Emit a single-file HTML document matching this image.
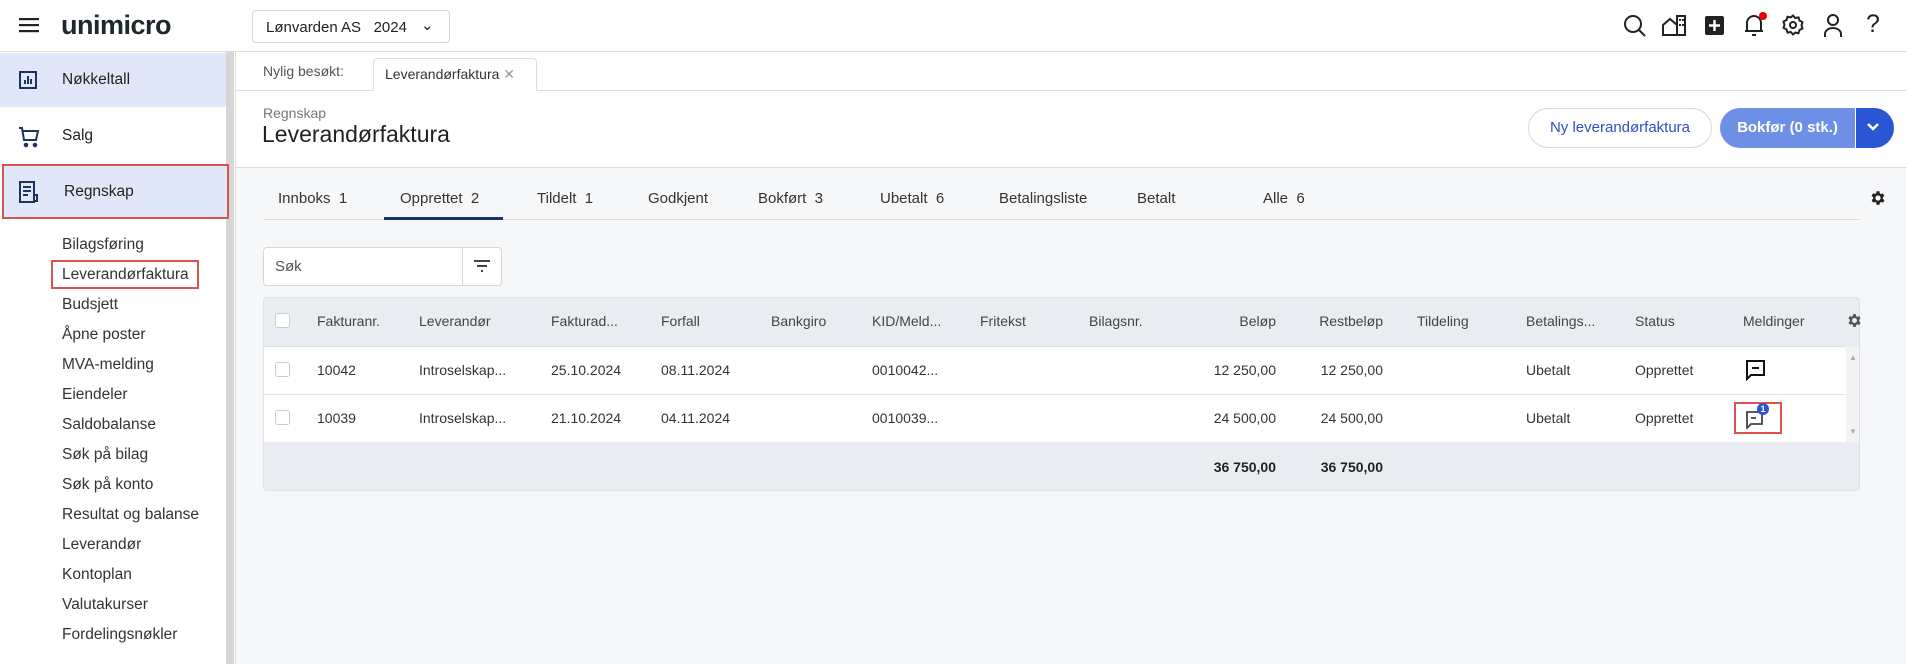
<!DOCTYPE html>
<html><head><meta charset="utf-8"><style>
*{box-sizing:border-box;margin:0;padding:0}
body{width:1906px;height:664px;overflow:hidden;font-family:"Liberation Sans",sans-serif;color:#222;background:#fff;position:relative;font-size:15px}
.a{position:absolute}
.hdr{left:0;top:0;width:1906px;height:52px;border-bottom:1px solid #dcdcdc;background:#fff}
.side{left:0;top:52px;width:236px;height:612px;border-right:1px solid #ddd;background:#fff}
.sb{left:226px;top:52px;width:8px;height:612px;background:#d6d6d6}
.nav{left:0;width:226px;height:54px;display:flex;align-items:center;padding-left:62px;font-size:15.5px;color:#222}
.sub{left:62px;font-size:15.5px;color:#333}
.main{left:236px;top:167px;width:1670px;height:497px;background:#f6f7f9}
.tab{font-size:15px;color:#333;top:190px}
.th{font-size:14px;color:#444;top:313px}
.td{font-size:14px;color:#333}
.r{text-align:right}
</style></head><body>
<div class="a hdr"></div>
<svg class="a" style="left:19px;top:17px" width="20" height="16"><rect y="1" width="20" height="2.2" fill="#222"/><rect y="7" width="20" height="2.2" fill="#222"/><rect y="13" width="20" height="2.2" fill="#222"/></svg>
<div class="a" style="left:61px;top:10px;font-size:27px;font-weight:bold;color:#1a2a2a;letter-spacing:-0.5px">unimicro</div>
<div class="a" style="left:252px;top:10px;width:198px;height:33px;border:1px solid #d5d5d5;border-radius:4px;font-size:15px;padding:8px 0 0 13px;color:#222">Lønvarden AS &nbsp; 2024 <span style="position:absolute;left:168px;top:5px">&#8964;</span></div>
<!-- icons -->
<svg class="a" style="left:1622px;top:13px" width="26" height="26" fill="none" stroke="#222" stroke-width="2"><circle cx="11" cy="11" r="8"/><path d="M17 17l6 6"/></svg>
<svg class="a" style="left:1662px;top:14px" width="24" height="22" fill="#222"><path d="M1 21V11l7-6 7 6v10z M15 21V2h8v19z" fill="none" stroke="#222" stroke-width="2"/><rect x="17" y="5" width="2" height="2"/><rect x="20" y="5" width="2" height="2"/><rect x="17" y="10" width="2" height="2"/><rect x="20" y="10" width="2" height="2"/></svg>
<svg class="a" style="left:1705px;top:16px" width="19" height="19"><rect width="19" height="19" rx="2" fill="#222"/><path d="M9.5 4v11M4 9.5h11" stroke="#fff" stroke-width="2.4"/></svg>
<svg class="a" style="left:1742px;top:11px" width="26" height="27" fill="none" stroke="#222" stroke-width="2"><path d="M5 20V12a7 7 0 0 1 14 0v8H3h18"/><path d="M10 24h4"/><circle cx="21" cy="5" r="4" fill="#e00" stroke="none"/></svg>
<svg class="a" style="left:1782px;top:14px" width="22" height="22" fill="none" stroke="#222" stroke-width="2"><path d="M11 1.5l2.2 2.5 3.3-.6 1 3.2 3 1.5-1 3.2 1 3.2-3 1.5-1 3.2-3.3-.6L11 20.5l-2.2-2.5-3.3.6-1-3.2-3-1.5 1-3.2-1-3.2 3-1.5 1-3.2 3.3.6z"/><circle cx="11" cy="11" r="3"/></svg>
<svg class="a" style="left:1823px;top:13px" width="20" height="25" fill="none" stroke="#222" stroke-width="2"><circle cx="10" cy="7" r="5"/><path d="M2 24v-3a8 6 0 0 1 16 0v3"/></svg>
<div class="a" style="left:1866px;top:10px;font-size:25px;color:#222">?</div>

<div class="a side"></div>
<div class="a sb"></div>
<div class="a nav" style="top:53px;background:#dfe7f8">Nøkkeltall</div>
<svg class="a" style="left:19px;top:71px" width="18" height="18" fill="none" stroke="#1d3461" stroke-width="2"><rect x="1" y="1" width="16" height="16"/><path d="M6 13V9M9 13V5M12 13V8"/></svg>
<div class="a nav" style="top:109px">Salg</div>
<svg class="a" style="left:18px;top:126px" width="22" height="22" fill="none" stroke="#1d3461" stroke-width="2"><path d="M1 2h3l2 12h12l2-9H5"/><circle cx="8" cy="19" r="1.3" fill="#1d3461"/><circle cx="17" cy="19" r="1.3" fill="#1d3461"/></svg>
<div class="a nav" style="top:164px;left:2px;width:227px;height:55px;background:#dfe7f8;border:2px solid #d9534f;padding-left:60px">Regnskap</div>
<svg class="a" style="left:19px;top:181px" width="20" height="22" fill="none" stroke="#1d3461" stroke-width="2"><path d="M1 1h14v20H1z M4 6h8M4 10h8M4 14h5"/><path d="M15 14h3v6h-3"/></svg>
<div class="a sub" style="top:236px">Bilagsføring</div>
<div class="a" style="left:51px;top:260px;width:148px;height:29px;border:2px solid #d9534f"></div>
<div class="a sub" style="top:266px">Leverandørfaktura</div>
<div class="a sub" style="top:296px">Budsjett</div>
<div class="a sub" style="top:326px">Åpne poster</div>
<div class="a sub" style="top:356px">MVA-melding</div>
<div class="a sub" style="top:386px">Eiendeler</div>
<div class="a sub" style="top:416px">Saldobalanse</div>
<div class="a sub" style="top:446px">Søk på bilag</div>
<div class="a sub" style="top:476px">Søk på konto</div>
<div class="a sub" style="top:506px">Resultat og balanse</div>
<div class="a sub" style="top:536px">Leverandør</div>
<div class="a sub" style="top:566px">Kontoplan</div>
<div class="a sub" style="top:596px">Valutakurser</div>
<div class="a sub" style="top:626px">Fordelingsnøkler</div>

<!-- recently visited -->
<div class="a" style="left:236px;top:90px;width:1670px;height:1px;background:#ddd"></div>
<div class="a" style="left:263px;top:63px;font-size:14px;color:#555">Nylig besøkt:</div>
<div class="a" style="left:373px;top:58px;width:164px;height:33px;border:1px solid #ddd;border-bottom:1px solid #fff;border-radius:4px 4px 0 0;background:#fff;font-size:14px;padding:7px 0 0 11px;color:#333">Leverandørfaktura <span style="color:#999">✕</span></div>
<div class="a" style="left:263px;top:105px;font-size:14px;color:#777">Regnskap</div>
<div class="a" style="left:262px;top:121px;font-size:23px;color:#222">Leverandørfaktura</div>
<div class="a" style="left:1528px;top:108px;width:184px;height:40px;border:1px solid #d6d6d6;border-radius:20px;color:#2f4fc4;font-size:15px;text-align:center;line-height:38px">Ny leverandørfaktura</div>
<div class="a" style="left:1720px;top:108px;width:135px;height:40px;border-radius:20px 0 0 20px;background:#6d8fe6;color:#fff;font-size:15px;font-weight:bold;text-align:center;line-height:40px">Bokfør (0 stk.)</div>
<div class="a" style="left:1855px;top:108px;width:39px;height:40px;border-radius:0 20px 20px 0;background:#2a56d6;border-left:1px solid #fff"></div>
<svg class="a" style="left:1866px;top:122px" width="14" height="10" fill="none" stroke="#fff" stroke-width="2.5"><path d="M2 2l5 5 5-5"/></svg>

<div class="a main" style="border-top:1px solid #ddd"></div>
<div class="a tab" style="left:278px">Innboks &nbsp;1</div>
<div class="a tab" style="left:400px">Opprettet &nbsp;2</div>
<div class="a tab" style="left:537px">Tildelt &nbsp;1</div>
<div class="a tab" style="left:648px">Godkjent</div>
<div class="a tab" style="left:758px">Bokført &nbsp;3</div>
<div class="a tab" style="left:880px">Ubetalt &nbsp;6</div>
<div class="a tab" style="left:999px">Betalingsliste</div>
<div class="a tab" style="left:1137px">Betalt</div>
<div class="a tab" style="left:1263px">Alle &nbsp;6</div>
<div class="a" style="left:263px;top:219px;width:1597px;height:1px;background:#ddd"></div>
<div class="a" style="left:384px;top:217px;width:119px;height:3px;background:#1d3461"></div>
<svg class="a" style="left:1869px;top:189px" width="18" height="18" viewBox="0 0 24 24" fill="#222"><path d="M19.4 13a7.5 7.5 0 0 0 0-2l2.1-1.6-2-3.5-2.5 1a7.6 7.6 0 0 0-1.7-1L15 3h-4l-.4 2.7a7.6 7.6 0 0 0-1.7 1l-2.5-1-2 3.5L6.6 11a7.5 7.5 0 0 0 0 2l-2.1 1.6 2 3.5 2.5-1a7.6 7.6 0 0 0 1.7 1L11 21h4l.4-2.7a7.6 7.6 0 0 0 1.7-1l2.5 1 2-3.5zM13 15.5a3.5 3.5 0 1 1 0-7 3.5 3.5 0 0 1 0 7z" transform="translate(-1 0)"/></svg>

<div class="a" style="left:263px;top:247px;width:239px;height:39px;border:1px solid #d6d6d6;border-radius:4px;background:#fff"></div>
<div class="a" style="left:462px;top:248px;width:1px;height:37px;background:#d6d6d6"></div>
<div class="a" style="left:275px;top:258px;font-size:15px;color:#555">Søk</div>
<svg class="a" style="left:473px;top:259px" width="18" height="14" fill="none" stroke="#444" stroke-width="2"><path d="M1 2h16M4 7h10M8 12h2"/></svg>

<div class="a" style="left:263px;top:297px;width:1597px;height:194px;border:1px solid #dde1e6;border-radius:4px;background:#e9ecf1"></div>
<div class="a" style="left:264px;top:346px;width:1595px;height:96px;background:#fff"></div>
<div class="a" style="left:264px;top:394px;width:1582px;height:1px;background:#e3e3e3"></div>
<div class="a" style="left:264px;top:346px;width:1595px;height:1px;background:#dde1e6"></div>
<div class="a" style="left:1846px;top:346px;width:13px;height:96px;background:#f3f3f3"></div>
<div class="a" style="left:1849px;top:353px;font-size:8px;color:#aaa">▲</div>
<div class="a" style="left:1849px;top:427px;font-size:8px;color:#aaa">▼</div>
<div class="a" style="left:275px;top:313px;width:15px;height:15px;border:1px solid #ccc;border-radius:3px;background:#fff"></div>
<div class="a" style="left:275px;top:362px;width:15px;height:15px;border:1px solid #ccc;border-radius:3px"></div>
<div class="a" style="left:275px;top:410px;width:15px;height:15px;border:1px solid #ccc;border-radius:3px"></div>

<div class="a th" style="left:317px">Fakturanr.</div>
<div class="a th" style="left:419px">Leverandør</div>
<div class="a th" style="left:551px">Fakturad...</div>
<div class="a th" style="left:661px">Forfall</div>
<div class="a th" style="left:771px">Bankgiro</div>
<div class="a th" style="left:872px">KID/Meld...</div>
<div class="a th" style="left:980px">Fritekst</div>
<div class="a th" style="left:1089px">Bilagsnr.</div>
<div class="a th r" style="left:1176px;width:100px">Beløp</div>
<div class="a th r" style="left:1283px;width:100px">Restbeløp</div>
<div class="a th" style="left:1417px">Tildeling</div>
<div class="a th" style="left:1526px">Betalings...</div>
<div class="a th" style="left:1635px">Status</div>
<div class="a th" style="left:1743px">Meldinger</div>
<svg class="a" style="left:1846px;top:312px" width="17" height="17" viewBox="0 0 24 24" fill="#555"><path d="M19.4 13a7.5 7.5 0 0 0 0-2l2.1-1.6-2-3.5-2.5 1a7.6 7.6 0 0 0-1.7-1L15 3h-4l-.4 2.7a7.6 7.6 0 0 0-1.7 1l-2.5-1-2 3.5L6.6 11a7.5 7.5 0 0 0 0 2l-2.1 1.6 2 3.5 2.5-1a7.6 7.6 0 0 0 1.7 1L11 21h4l.4-2.7a7.6 7.6 0 0 0 1.7-1l2.5 1 2-3.5zM13 15.5a3.5 3.5 0 1 1 0-7 3.5 3.5 0 0 1 0 7z" transform="translate(-1 0)"/></svg>

<div class="a td" style="top:362px;left:317px">10042</div>
<div class="a td" style="top:362px;left:419px">Introselskap...</div>
<div class="a td" style="top:362px;left:551px">25.10.2024</div>
<div class="a td" style="top:362px;left:661px">08.11.2024</div>
<div class="a td" style="top:362px;left:872px">0010042...</div>
<div class="a td r" style="top:362px;left:1176px;width:100px">12 250,00</div>
<div class="a td r" style="top:362px;left:1283px;width:100px">12 250,00</div>
<div class="a td" style="top:362px;left:1526px">Ubetalt</div>
<div class="a td" style="top:362px;left:1635px">Opprettet</div>
<svg class="a" style="left:1746px;top:360px" width="20" height="21" fill="none" stroke="#111" stroke-width="2"><path d="M1 1h17v14H5l-4 4z"/><path d="M6 8h7"/></svg>

<div class="a td" style="top:410px;left:317px">10039</div>
<div class="a td" style="top:410px;left:419px">Introselskap...</div>
<div class="a td" style="top:410px;left:551px">21.10.2024</div>
<div class="a td" style="top:410px;left:661px">04.11.2024</div>
<div class="a td" style="top:410px;left:872px">0010039...</div>
<div class="a td r" style="top:410px;left:1176px;width:100px">24 500,00</div>
<div class="a td r" style="top:410px;left:1283px;width:100px">24 500,00</div>
<div class="a td" style="top:410px;left:1526px">Ubetalt</div>
<div class="a td" style="top:410px;left:1635px">Opprettet</div>
<div class="a" style="left:1734px;top:402px;width:48px;height:32px;border:2px solid #d9534f"></div>
<svg class="a" style="left:1746px;top:410px" width="18" height="19" fill="none" stroke="#444" stroke-width="1.8"><path d="M1 2h15v12H5l-4 4z"/><path d="M5 8h5"/></svg>
<div class="a" style="left:1757px;top:403px;width:12px;height:12px;border-radius:6px;background:#2a56d6;color:#fff;font-size:9px;text-align:center;line-height:12px;font-weight:bold">1</div>

<div class="a td r" style="top:459px;left:1176px;width:100px;font-weight:bold;color:#222">36 750,00</div>
<div class="a td r" style="top:459px;left:1283px;width:100px;font-weight:bold;color:#222">36 750,00</div>
</body></html>
